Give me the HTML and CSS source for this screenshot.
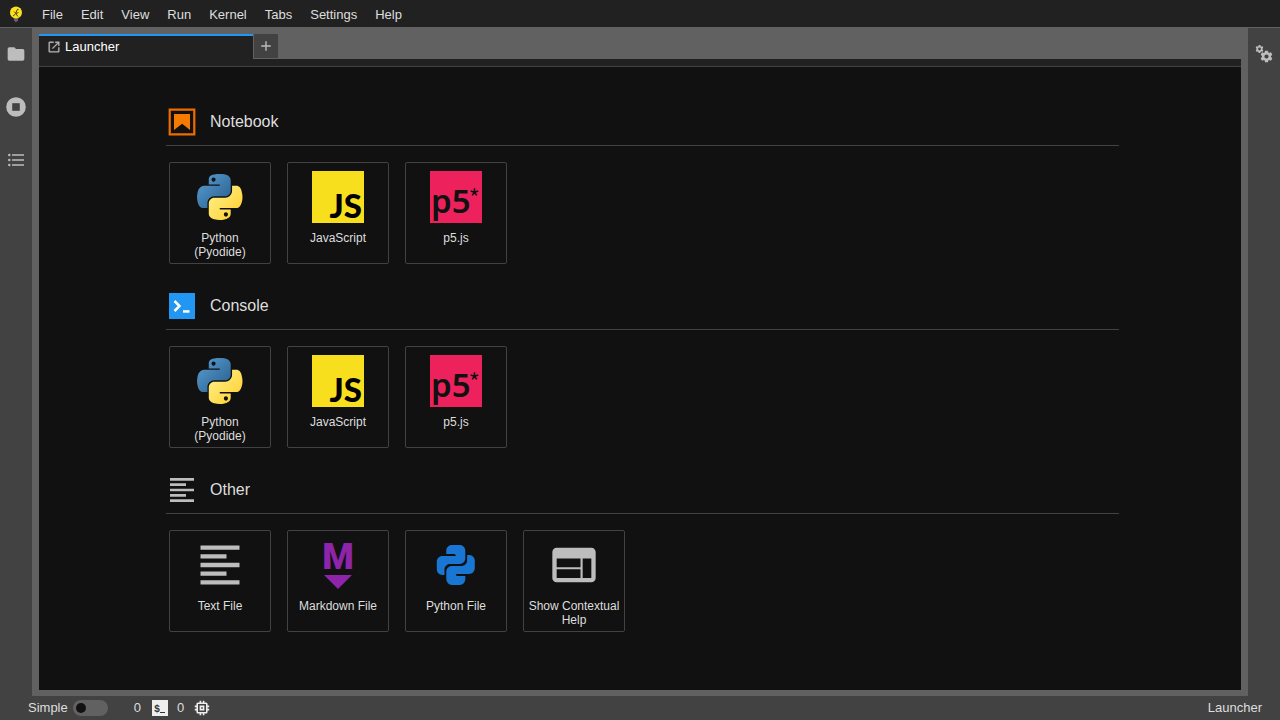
FILE: index.html
```html
<!DOCTYPE html>
<html lang="en">
<head>
<meta charset="utf-8">
<title>Launcher</title>
<link rel="stylesheet" href="styles.css">
</head>
<body>
<svg class="defs" aria-hidden="true">
  <defs>
    <linearGradient id="blue" x1="0" y1="0" x2="1" y2="1"><stop offset="0" stop-color="#5a9fd4"/><stop offset="0.8" stop-color="#306998"/></linearGradient>
    <linearGradient id="yellow" x1="0" y1="0" x2="1" y2="1"><stop offset="0.3" stop-color="#ffe873"/><stop offset="0.8" stop-color="#ffd43b"/></linearGradient>
    <symbol id="python" viewBox="6 -5 117 117">
      <path fill="url(#blue)" d="M63.391 1.988c-4.222.02-8.252.379-11.8 1.007-10.45 1.846-12.346 5.71-12.346 12.837v9.411h24.693v3.137H29.977c-7.176 0-13.46 4.313-15.426 12.521-2.268 9.405-2.368 15.275 0 25.096 1.755 7.311 5.947 12.519 13.124 12.519h8.491V67.234c0-8.151 7.051-15.34 15.426-15.34h24.665c6.866 0 12.346-5.654 12.346-12.548V15.833c0-6.693-5.646-11.72-12.346-12.837-4.244-.706-8.645-1.027-12.866-1.008zM50.037 9.557c2.55 0 4.634 2.117 4.634 4.721 0 2.593-2.083 4.69-4.634 4.69-2.56 0-4.633-2.097-4.633-4.69-.001-2.604 2.073-4.721 4.633-4.721z"/>
      <path fill="url(#yellow)" d="M91.682 28.38v10.966c0 8.5-7.208 15.655-15.426 15.655H51.591c-6.756 0-12.346 5.783-12.346 12.549v23.515c0 6.691 5.818 10.628 12.346 12.547 7.816 2.297 15.312 2.713 24.665 0 6.216-1.801 12.346-5.423 12.346-12.547v-9.412H63.938v-3.138h37.012c7.176 0 9.852-5.005 12.348-12.519 2.578-7.735 2.467-15.174 0-25.096-1.774-7.145-5.161-12.521-12.348-12.521h-9.268zM77.809 87.927c2.561 0 4.634 2.097 4.634 4.692 0 2.602-2.074 4.719-4.634 4.719-2.55 0-4.633-2.117-4.633-4.719 0-2.595 2.083-4.692 4.633-4.692z"/>
    </symbol>
    <symbol id="lines" viewBox="0 0 24 24">
      <path fill="#bdbdbd" d="M15 15H3v2h12v-2zm0-8H3v2h12V7zM3 13h18v-2H3v2zm0 8h18v-2H3v2zM3 3v2h18V3H3z"/>
    </symbol>
    <symbol id="gear" viewBox="2 2 20 20">
      <path d="M19.400 13a7.500 7.500 0 0 0 0-2l2.100-1.650c.2-.15.25-.42.12-.64l-2-3.460c-.12-.22-.39-.3-.61-.22l-2.490 1a7.300 7.300 0 0 0-1.690-.98l-.38-2.650A.49.49 0 0 0 14 2h-4a.49.49 0 0 0-.49.42l-.38 2.650c-.61.25-1.170.59-1.690.98l-2.490-1a.49.49 0 0 0-.61.22l-2 3.460c-.13.22-.07.49.12.64L4.570 11a7.900 7.900 0 0 0 0 2l-2.110 1.650c-.19.15-.24.42-.12.64l2 3.460c.12.22.39.3.61.22l2.490-1c.52.4 1.080.73 1.690.98l.38 2.650c.03.24.24.42.49.42h4c.25 0 .46-.18.49-.42l.38-2.650a7 7 0 0 0 1.690-.98l2.490 1c.23.09.49 0 .61-.22l2-3.460a.5.5 0 0 0-.12-.64zM12 15.500a3.500 3.500 0 1 1 0-7 3.500 3.500 0 0 1 0 7z"/>
    </symbol>
    <symbol id="javascript" viewBox="0 0 52 52">
      <path fill="#f7df1e" d="M0 0h52v52H0z"/><text x="50" y="47" class="js">JS</text>
    </symbol>
    <symbol id="p5" viewBox="0 0 52 52">
      <path fill="#ed225d" d="M0 0h52v52H0z"/><text x="1" y="42" class="p5">p5</text>
      <path d="M44.500 21.200v-4M44.500 21.200l-3.800-1.200M44.500 21.200l3.800-1.200M44.500 21.200l-2.300 3.200M44.500 21.200l2.300 3.200" stroke="#111" stroke-width="1.600"/>
    </symbol>
  </defs>
</svg>
<div class="app">
  <header class="menubar">
    <svg class="logo" viewBox="0 0 16 18" role="img" aria-label="Logo">
      <path d="M5.500 12h5l-.5 3.500L8 17.500 6 15.500z" fill="#616161"/>
      <circle cx="8" cy="7.500" r="6" fill="#fbe11f"/>
      <path d="M5 11l2.500-2 1.500-4M6 6.500l2 2 2.500-1M8 9l2 2.500" fill="none" stroke="#4d4712" stroke-width="1"/>
      <circle cx="9.800" cy="4.500" r=".8" fill="#4d4712"/>
    </svg>
    <nav class="menus" aria-label="Main menu">
      <button>File</button><button>Edit</button><button>View</button><button>Run</button><button>Kernel</button><button>Tabs</button><button>Settings</button><button>Help</button>
    </nav>
  </header>

  <aside class="sidebar">
    <button aria-label="File browser"><svg viewBox="0 0 24 24" class="i20"><path d="M10 4H4c-1.100 0-2 .9-2 2v12c0 1.100.9 2 2 2h16c1.100 0 2-.9 2-2V8c0-1.100-.9-2-2-2h-8z"/></svg></button>
    <button aria-label="Running terminals and kernels"><svg viewBox="0 0 20 20" class="i20"><circle cx="10" cy="10" r="9.800"/><path fill="#424242" d="M6.200 6.200h7.600v7.600H6.200z"/></svg></button>
    <button aria-label="Table of contents"><svg viewBox="0 0 20 20" class="i20"><path d="M6 4.300h12v1.400H6zM6 9.300h12v1.400H6zM6 14.300h12v1.400H6z"/><circle cx="3.300" cy="5" r="1.200"/><circle cx="3.300" cy="10" r="1.200"/><circle cx="3.300" cy="15" r="1.200"/></svg></button>
  </aside>

  <main class="dock">
    <div class="tabs">
      <div class="tab">
        <svg viewBox="0 0 32 32" class="i14"><path d="M26 28H6a2 2 0 0 1-2-2V6a2 2 0 0 1 2-2h9v2H6v20h20v-9h2v9a2 2 0 0 1-2 2z" stroke="#bdbdbd"/><path d="M19 4v2h5.600L12 18.600 13.400 20 26 7.400V13h2V4z" stroke="#bdbdbd"/></svg>
        <span>Launcher</span>
      </div>
      <button class="add" aria-label="New launcher"><svg viewBox="0 0 16 16" class="i16"><path d="M7.300 3.200h1.400v4.100h4.100v1.400H8.700v4.100H7.300V8.700H3.200V7.300h4.100z"/></svg></button>
    </div>
    <div class="toolbar"></div>
    <div class="launcher">
      <section>
        <h2><svg viewBox="0 0 22 22" class="i32"><path fill="#ef6c00" d="M18.700 3.300v15.400H3.300V3.300h15.400m1.500-1.500H1.800v18.400h18.400V1.800z"/><path fill="#f57c00" d="M16.500 16.500l-5.400-4.300-5.600 4.300v-11h11z"/></svg>Notebook</h2>
        <div class="cards">
          <button class="card"><svg class="i52"><use href="#python"/></svg><span>Python (Pyodide)</span></button>
          <button class="card"><svg class="i52"><use href="#javascript"/></svg><span>JavaScript</span></button>
          <button class="card"><svg class="i52"><use href="#p5"/></svg><span>p5.js</span></button>
        </div>
      </section>
      <section>
        <h2><svg viewBox="0 0 32 32" class="i32"><path fill="#2196f3" d="M3 3h26v26H3z"/><path d="M8.500 11l5 5-5 5" fill="none" stroke="#fff" stroke-width="2.500"/><path fill="#fff" d="M17 20.200h6.500v2.500H17z"/></svg>Console</h2>
        <div class="cards">
          <button class="card"><svg class="i52"><use href="#python"/></svg><span>Python (Pyodide)</span></button>
          <button class="card"><svg class="i52"><use href="#javascript"/></svg><span>JavaScript</span></button>
          <button class="card"><svg class="i52"><use href="#p5"/></svg><span>p5.js</span></button>
        </div>
      </section>
      <section>
        <h2><svg class="i32"><use href="#lines"/></svg>Other</h2>
        <div class="cards">
          <button class="card"><svg class="i52"><use href="#lines"/></svg><span>Text File</span></button>
          <button class="card"><svg class="i52" viewBox="0 0 52 52"><text x="26" y="30" class="md">M</text><path fill="#8e24aa" d="M12 36h28L26 50z"/></svg><span>Markdown File</span></button>
          <button class="card"><svg class="i52" viewBox="0 0 52 52"><path fill="#1976d2" transform="translate(3 1) scale(1.900 2)" d="M19.140 7.500A2.860 2.860 0 0 1 22 10.360v3.780A2.860 2.860 0 0 1 19.140 17H12c0 .39.32.96.71.96H17v1.680a2.860 2.860 0 0 1-2.860 2.860H9.860A2.860 2.860 0 0 1 7 19.640v-3.750c0-1.580 1.280-2.850 2.860-2.850h5.250c1.580 0 2.850-1.280 2.850-2.860V7.500zM4.860 17.500C3.280 17.500 2 16.220 2 14.640v-3.780C2 9.280 3.280 8 4.860 8H12c0-.39-.32-.96-.71-.96H7V5.360C7 3.780 8.280 2.500 9.860 2.500h4.280C15.720 2.500 17 3.780 17 5.360v3.750c0 1.580-1.280 2.850-2.860 2.850H8.890c-1.580 0-2.850 1.280-2.850 2.860v2.680z"/></svg><span>Python File</span></button>
          <button class="card"><svg class="i52" viewBox="0 0 24 24"><path fill="#bdbdbd" d="M20 4H4c-1.100 0-2 .9-2 2v12c0 1.100.9 2 2 2h16c1.100 0 2-.9 2-2V6c0-1.100-.9-2-2-2zm-5 14H4v-4h11v4zm0-5H4V9h11v4zm5 5h-4V9h4v9z"/></svg><span>Show Contextual Help</span></button>
        </div>
      </section>
    </div>
  </main>

  <aside class="sidebar right">
    <button aria-label="Property inspector"><svg viewBox="0 0 20 20" class="i20"><use href="#gear" x="1.500" y="1" width="8" height="8"/><use href="#gear" x="6.500" y="6.500" width="12" height="12"/></svg></button>
  </aside>

  <footer class="status">
    <label for="simple">Simple</label>
    <input id="simple" class="switch" type="checkbox" role="switch">
    <span>0</span>
    <svg viewBox="0 0 16 16" class="i16 term"><path fill="#eee" d="M0 0h16v16H0z"/><text x="2" y="12" class="dollar">$</text><path stroke="#333" d="M8 12.500h5"/></svg>
    <span>0</span>
    <svg viewBox="2 2 20 20" class="i16 chip"><path fill="#eee" d="M15 9H9v6h6V9zm-2 4h-2v-2h2v2zm8-2V9h-2V7c0-1.100-.9-2-2-2h-2V3h-2v2h-2V3H9v2H7c-1.100 0-2 .9-2 2v2H3v2h2v2H3v2h2v2c0 1.100.9 2 2 2h2v2h2v-2h2v2h2v-2h2c1.100 0 2-.9 2-2v-2h2v-2h-2v-2h2zm-4 6H7V7h10v10z"/></svg>
    <span class="mode">Launcher</span>
  </footer>
</div>
</body>
</html>
```
FILE: styles.css
```css
* { box-sizing: border-box; }
body {
  margin: 0;
  background: #424242;
  color: #dedede;
  font: 13px/16px "Liberation Sans", Arial, sans-serif;
}
button {
  margin: 0;
  padding: 0;
  border: 0;
  background: none;
  color: inherit;
  font: inherit;
  cursor: pointer;
}
svg { display: block; flex: none; fill: #bdbdbd; overflow: visible; }
.defs { position: absolute; width: 0; height: 0; }
.i14 { width: 14px; height: 14px; }
.i16 { width: 16px; height: 16px; }
.i20 { width: 20px; height: 20px; }
.i32 { width: 32px; height: 32px; }
.i52 { width: 52px; height: 52px; }

.app {
  display: grid;
  grid-template-columns: 32px 1fr 32px;
  grid-template-rows: 28px 1fr 24px;
  min-height: 100vh;
}
.menubar {
  grid-column: 1 / -1;
  display: flex;
  align-items: center;
  background: #212121;
  border-bottom: 1px solid #616161;
}
.logo { width: 16px; height: 18px; margin: 0 9px 0 8px; }
.menus { display: flex; }
.menus button { padding: 6px 9px 4px; }

.sidebar {
  display: flex;
  flex-direction: column;
  align-items: center;
  gap: 1px;
  background: #424242;
}
.sidebar button {
  display: grid;
  place-items: center;
  width: 32px;
  height: 52px;
}

.dock {
  display: flex;
  flex-direction: column;
  padding: 6px 7px;
  background: #616161;
}
.tabs { display: flex; align-items: flex-start; }
.tab {
  display: flex;
  align-items: center;
  gap: 4px;
  width: 214px;
  height: 25px;
  padding: 0 8px 2px;
  border-top: 2px solid #2196f3;
  background: #212121;
  color: #fff;
}
.add {
  display: grid;
  place-items: center;
  width: 25px;
  height: 24px;
  border-left: 1px solid #616161;
  background: #424242;
}
.toolbar { height: 8px; background: #212121; border-bottom: 1px solid #424242; }
.launcher {
  flex: 1;
  display: flex;
  flex-direction: column;
  gap: 18px;
  padding: 31px 122px 32px 127px;
  background: #111;
}
h2 {
  display: flex;
  align-items: center;
  gap: 12px;
  height: 48px;
  margin: 0 0 16px;
  border-bottom: 1px solid #424242;
  font-size: 16px;
  font-weight: 400;
}
.cards { display: flex; flex-wrap: wrap; gap: 16px; padding-left: 3px; }
.card {
  display: flex;
  flex-direction: column;
  align-items: center;
  gap: 8px;
  width: 102px;
  height: 102px;
  padding: 8px 4px 0;
  border: 1px solid #424242;
  border-radius: 2px;
  font-size: 12px;
  line-height: 14px;
}
.js { font: 900 33px Lato, sans-serif; fill: #000; text-anchor: end; }
.p5 { font: 600 33px "Noto Sans", sans-serif; fill: #111; }
.md { font: 900 36px Roboto, sans-serif; fill: #8e24aa; text-anchor: middle; }
.dollar { font: 700 10px "Liberation Mono", monospace; fill: #333; }

.status {
  grid-column: 1 / -1;
  display: flex;
  align-items: center;
  padding: 0 18px 0 28px;
  background: #424242;
}
.switch {
  appearance: none;
  display: flex;
  align-items: center;
  width: 35px;
  height: 16px;
  margin: 0 26px 0 5px;
  padding: 0 3px;
  border-radius: 8px;
  background: #616161;
}
.switch::before {
  content: "";
  width: 10px;
  height: 10px;
  border-radius: 50%;
  background: #111;
}
.switch:checked::before { margin-left: auto; }
.term { margin: 0 9px 0 11px; }
.chip { margin-left: 10px; }
.mode { margin-left: auto; }
```
